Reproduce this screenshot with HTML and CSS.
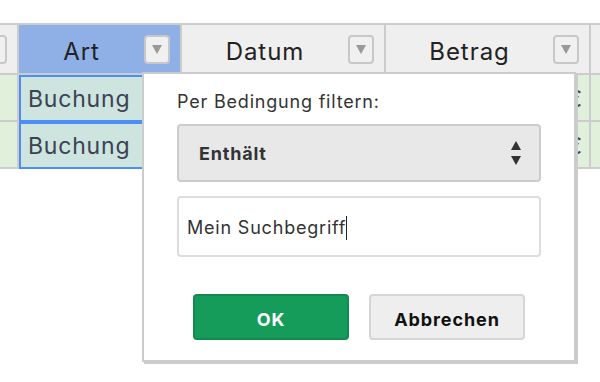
FILE: index.html
```html
<!DOCTYPE html>
<html lang="de">
	<head>
		<meta charset="UTF-8" />
		<meta name="viewport" content="width=device-width, initial-scale=1.0" />
		<title>Filter</title>
		<link rel="stylesheet" href="styles.css">
	</head>
	<body>
		<div class="sheet">
			<div class="row head">
				<div class="cell c0"><span class="drop"><svg width="10" height="9" viewBox="0 0 10 9"><polygon points="0,0 10,0 5,9" /></svg></span></div>
				<div class="cell c1 active"><span class="label">Art</span><span class="drop"><svg width="10" height="9" viewBox="0 0 10 9"><polygon points="0,0 10,0 5,9" /></svg></span></div>
				<div class="cell c2"><span class="label">Datum</span><span class="drop"><svg width="10" height="9" viewBox="0 0 10 9"><polygon points="0,0 10,0 5,9" /></svg></span></div>
				<div class="cell c3"><span class="label">Betrag</span><span class="drop"><svg width="10" height="9" viewBox="0 0 10 9"><polygon points="0,0 10,0 5,9" /></svg></span></div>
				<div class="cell c4"></div>
			</div>
			<div class="row">
				<div class="cell c0"></div>
				<div class="cell c1 sel">Buchung</div>
				<div class="cell c2"></div>
				<div class="cell c3 num">€</div>
				<div class="cell c4"></div>
			</div>
			<div class="row">
				<div class="cell c0"></div>
				<div class="cell c1 sel">Buchung</div>
				<div class="cell c2"></div>
				<div class="cell c3 num">€</div>
				<div class="cell c4"></div>
			</div>
		</div>

		<div class="filter">
			<p class="filter-title">Per Bedingung filtern:</p>
			<div class="select">
				<span>Enthält</span>
				<svg width="10" height="24" viewBox="0 0 10 24"><polygon points="5,0 10,9 0,9" /><polygon points="0,15 10,15 5,24" /></svg>
			</div>
			<div class="input">Mein Suchbegriff<span class="caret"></span></div>
			<div class="actions">
				<button class="btn ok">OK</button>
				<button class="btn cancel">Abbrechen</button>
			</div>
		</div>
	</body>
</html>
```

FILE: styles.css
```css
* { margin: 0; padding: 0; box-sizing: border-box; }
body {
	font-family: Inter, 'Liberation Sans', sans-serif;
	letter-spacing: 0.05em;
	background: white;
	overflow: hidden;
}
.sheet {
	margin-top: 23px;
	border-top: 2px solid #cccccc;
}
.row {
	display: flex;
	height: 47px;
}
.row.head {
	height: 50px;
}
.cell {
	flex: none;
	border-right: 2px solid #cccccc;
	border-bottom: 2px solid #cccccc;
	background: #e1f0da;
	font-size: 23px;
	color: #3b4252;
	display: flex;
	align-items: center;
	padding: 3px 10px 0;
	overflow: hidden;
	white-space: nowrap;
}
.head .cell {
	background: #efefef;
	color: #222222;
	font-size: 24px;
	letter-spacing: 0.04em;
	padding: 0 10px 0 0;
}
.head .cell.active { background: #8eb0e6; }
.c0 { width: 19px; justify-content: flex-end; }
.c1 { width: 163px; }
.c2 { width: 204px; }
.c3 { width: 205px; }
.c4 { flex: 1; border-right: none; }
.row .c0, .row .c4 { padding: 0; }
.head .c0 { padding-right: 10px; }
.num { justify-content: flex-end; padding-right: 7px; letter-spacing: 0; }
.label {
	flex: 1;
	text-align: center;
	padding-top: 5px;
}
.drop {
	flex: none;
	width: 26px;
	height: 29px;
	border: 2px solid #c8c8c8;
	border-radius: 4px;
	background: #f0f0f0;
	display: flex;
	align-items: center;
	justify-content: center;
}
.drop svg { fill: #999999; }
.sel {
	background: #cde4df;
	border-bottom-color: #4c8df6;
	box-shadow: inset 2px 2px 0 #4c8df6, inset -2px 0 0 #4c8df6;
	padding-left: 9px;
}

.filter {
	position: absolute;
	left: 142px;
	top: 72px;
	width: 434px;
	background: white;
	border: 2px solid #cccccc;
	box-shadow: 2px 2px 0 #cccccc;
	padding: 18px 33px 20px;
	color: #333333;
}
.filter-title {
	font-size: 18px;
	line-height: 20px;
	margin-bottom: 12px;
}
.select {
	height: 58px;
	background: #e8e8e8;
	border: 2px solid #cccccc;
	border-radius: 4px;
	display: flex;
	align-items: center;
	justify-content: space-between;
	padding: 0 18px 0 20px;
	font-size: 18px;
	font-weight: 700;
}
.select svg { fill: #333333; }
.input {
	height: 61px;
	margin-top: 14px;
	border: 2px solid #dddddd;
	border-radius: 4px;
	display: flex;
	align-items: center;
	padding: 2px 8px 0;
	font-size: 18px;
}
.caret {
	display: inline-block;
	width: 1px;
	height: 24px;
	background: #222222;
	margin-left: 0;
}
.actions {
	display: flex;
	justify-content: center;
	gap: 20px;
	margin-top: 37px;
}
.btn {
	width: 156px;
	height: 46px;
	border-radius: 4px;
	font-family: inherit;
	font-size: 18px;
	font-weight: 700;
	letter-spacing: 0.05em;
	padding-top: 4px;
	cursor: pointer;
}
.ok {
	background: #159c5a;
	border: 2px solid #138a50;
	color: white;
}
.cancel {
	background: #eeeeee;
	border: 2px solid #d6d6d6;
	color: #111111;
}
```
